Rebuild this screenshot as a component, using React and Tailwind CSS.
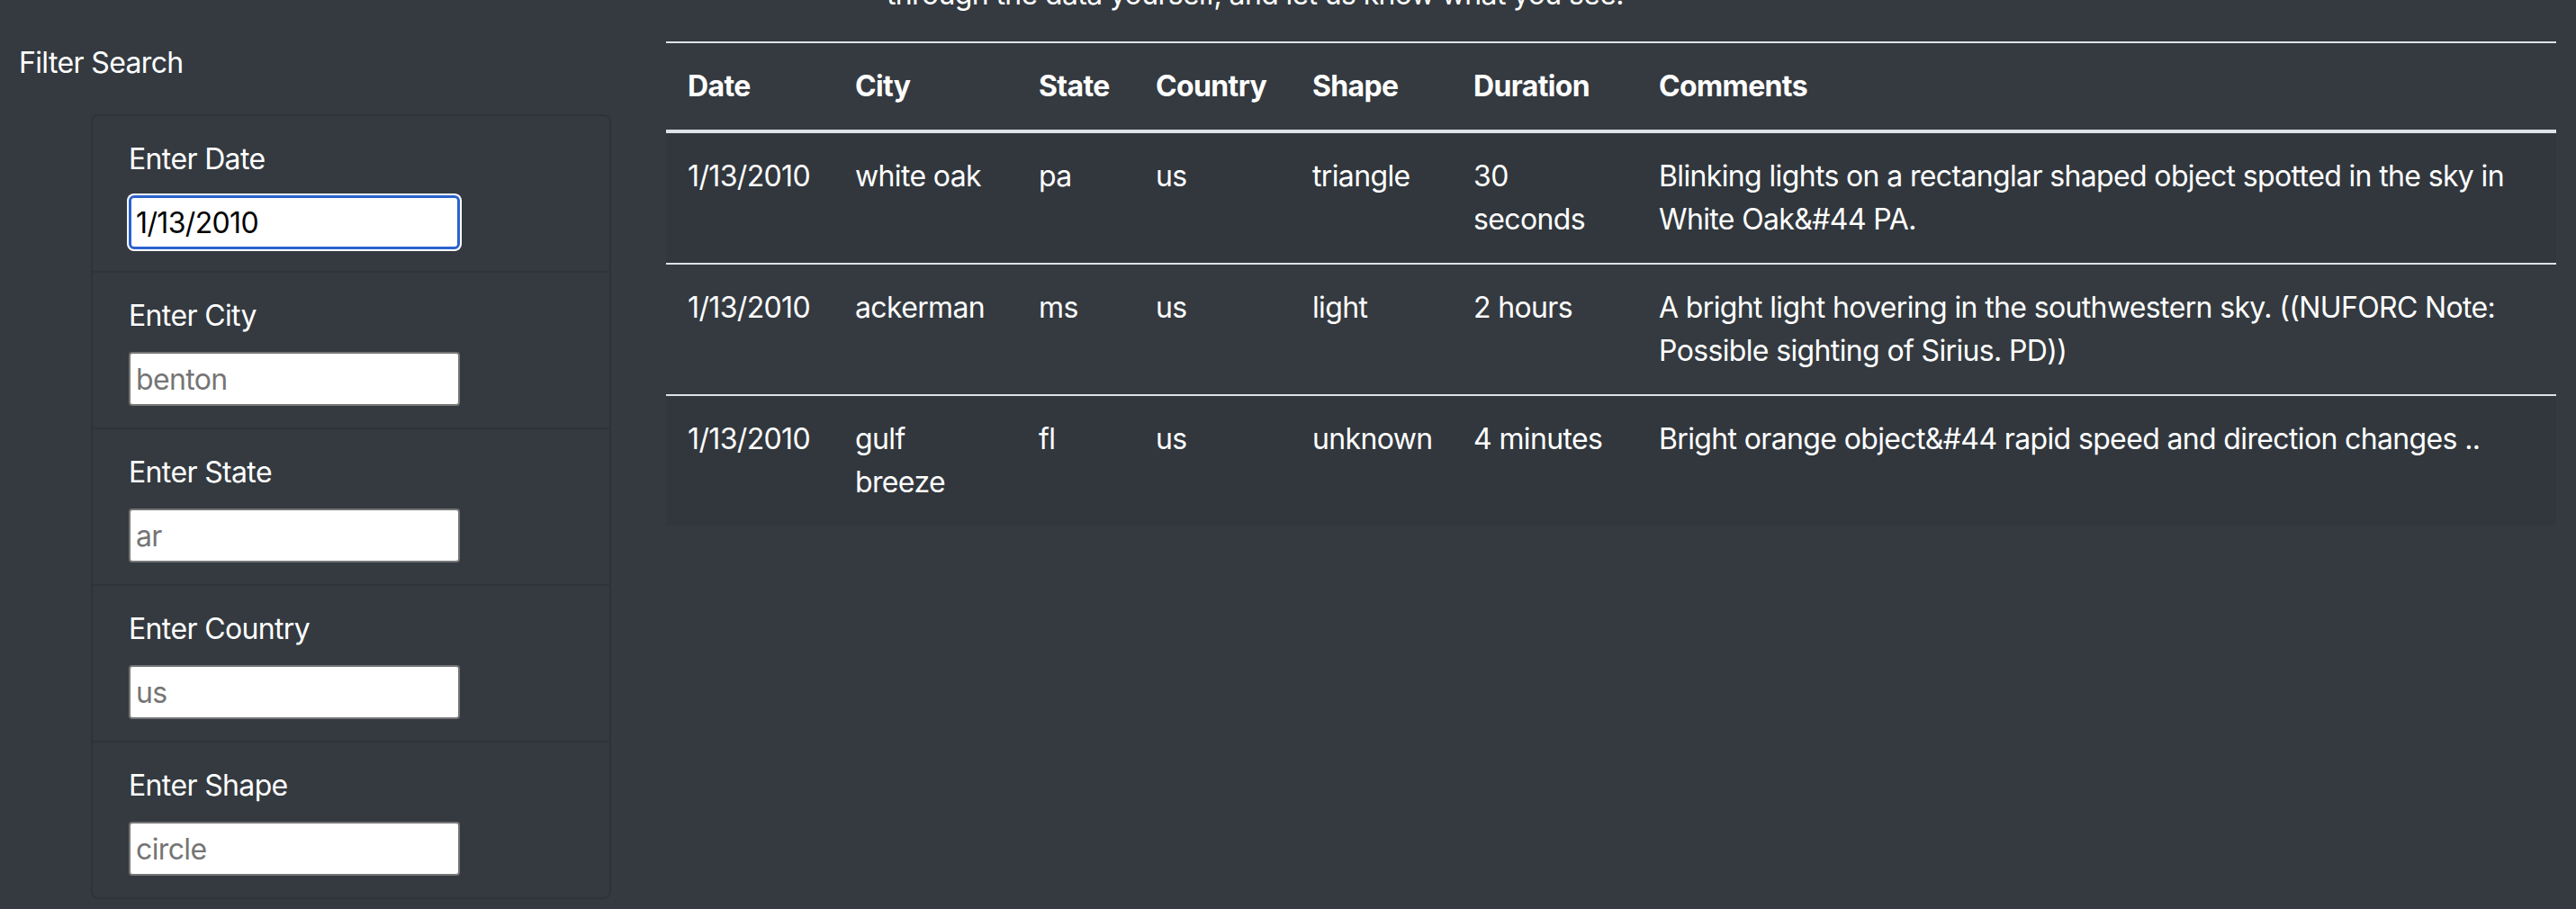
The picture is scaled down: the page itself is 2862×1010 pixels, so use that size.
import React from 'react';

const filters = [
  { label: 'Enter Date', value: '1/13/2010', focused: true },
  { label: 'Enter City', placeholder: 'benton' },
  { label: 'Enter State', placeholder: 'ar' },
  { label: 'Enter Country', placeholder: 'us' },
  { label: 'Enter Shape', placeholder: 'circle' },
];

const rows = [
  {
    date: '1/13/2010',
    city: 'white oak',
    state: 'pa',
    country: 'us',
    shape: 'triangle',
    duration: '30 seconds',
    comments: 'Blinking lights on a rectanglar shaped object spotted in the sky in White Oak&#44 PA.',
  },
  {
    date: '1/13/2010',
    city: 'ackerman',
    state: 'ms',
    country: 'us',
    shape: 'light',
    duration: '2 hours',
    comments: 'A bright light hovering in the southwestern sky. ((NUFORC Note: Possible sighting of Sirius. PD))',
  },
  {
    date: '1/13/2010',
    city: 'gulf breeze',
    state: 'fl',
    country: 'us',
    shape: 'unknown',
    duration: '4 minutes',
    comments: 'Bright orange object&#44 rapid speed and direction changes ..',
  },
];

const headers = ['Date', 'City', 'State', 'Country', 'Shape', 'Duration', 'Comments'];

export default function App() {
  return (
    <div className="flex h-[1010px] w-full overflow-hidden bg-[#343a40] font-['Inter',sans-serif] text-[32px] leading-[48px] tracking-[-0.02em] text-white">
      {/* filter sidebar */}
      <div className="w-[740px] shrink-0 pt-[46px]">
        <h5 className="pl-[21px]">Filter Search</h5>
        <div className="ml-[101px] mt-[33px] w-[578px] rounded-[8px] border-2 border-[#2e3338]">
          {filters.map((f, i) => (
            <div
              key={f.label}
              className={`px-[40px] py-[24px] ${i > 0 ? 'border-t-2 border-[#2e3338]' : ''}`}
            >
              <label className="mb-[16px] block">{f.label}</label>
              {f.focused ? (
                <input
                  type="text"
                  defaultValue={f.value}
                  className="block h-[60px] w-[368px] rounded-[6px] border-[3px] border-[#2c62cc] bg-white px-[5px] tracking-[-0.02em] text-black outline-none ring-2 ring-white"
                />
              ) : (
                <input
                  type="text"
                  placeholder={f.placeholder}
                  className="block h-[60px] w-[368px] rounded-[4px] border-2 border-[#767676] bg-white px-[6px] tracking-[-0.02em] text-black outline-none placeholder:text-[#757575]"
                />
              )}
            </div>
          ))}
        </div>
      </div>

      {/* results */}
      <div className="flex-1 pr-[22px]">
        <p className="-mt-[30px] ml-[245px] whitespace-nowrap">
          through the data yourself, and let us know what you see.
        </p>
        <table className="mt-[28px] w-[2100px] table-fixed border-collapse text-left">
          <colgroup>
            <col className="w-[186px]" />
            <col className="w-[204px]" />
            <col className="w-[130px]" />
            <col className="w-[174px]" />
            <col className="w-[179px]" />
            <col className="w-[206px]" />
            <col />
          </colgroup>
          <thead>
            <tr>
              {headers.map((h) => (
                <th
                  key={h}
                  className="border-t-2 border-b-4 border-[#dee2e6] p-[24px] align-bottom font-bold"
                >
                  {h}
                </th>
              ))}
            </tr>
          </thead>
          <tbody>
            {rows.map((r, i) => (
              <tr key={i} className={i % 2 === 0 ? 'bg-[#31373d]' : ''}>
                {[r.date, r.city, r.state, r.country, r.shape, r.duration, r.comments].map((c, j) => (
                  <td key={j} className="border-t-2 border-[#dee2e6] p-[24px] align-top">
                    {c}
                  </td>
                ))}
              </tr>
            ))}
          </tbody>
        </table>
      </div>
    </div>
  );
}
